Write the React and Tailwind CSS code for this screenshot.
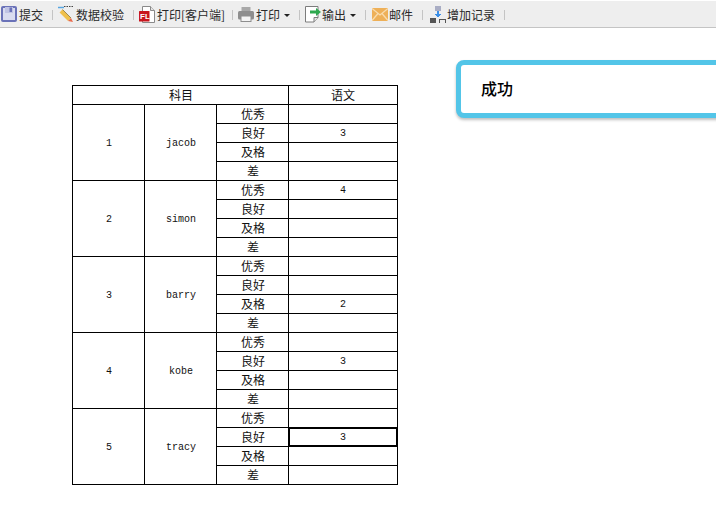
const groups = [
  { id: 1, name: "jacob", vals: ["", "3", "", ""] },
  { id: 2, name: "simon", vals: ["4", "", "", ""] },
  { id: 3, name: "barry", vals: ["", "", "2", ""] },
  { id: 4, name: "kobe", vals: ["", "3", "", ""] },
  { id: 5, name: "tracy", vals: ["", "3", "", ""] },
];
const grades = ["优秀", "良好", "及格", "差"];

const SaveIcon = () => (
  <svg width="16" height="16" viewBox="0 0 16 16">
    <rect x="1" y="1" width="14" height="14" rx="1" fill="#d9dcf0" stroke="#6a72b8" strokeWidth="2" />
    <rect x="4" y="1" width="8" height="6" fill="#bfc3e4" />
    <rect x="8.500" y="1.500" width="2.500" height="4.500" fill="#6a72b8" />
  </svg>
);
const CheckIcon = () => (
  <svg width="16" height="16" viewBox="0 0 16 16">
    <path d="M0 1.500h6" stroke="#58a6e0" strokeWidth="1.500" />
    <path d="M6 0.500h10" stroke="#444" strokeWidth="1" strokeDasharray="1.500 1" />
    <path d="M3 5l8.500 8.500" stroke="#efc04a" strokeWidth="4" />
    <path d="M4.500 3.500l8.500 8.500" stroke="#8a7434" strokeWidth="0.800" />
    <path d="M10 15l3-3 2 4z" fill="#ea6a4c" />
  </svg>
);
const PdfIcon = () => (
  <svg width="16" height="17" viewBox="0 0 16 17">
    <path d="M3.500 0.500h8l4 4v12h-12z" fill="#fff" stroke="#8a8a8a" />
    <path d="M11.500 0.500v4h4" fill="#e4e4e4" stroke="#8a8a8a" />
    <rect x="0" y="5" width="10.500" height="10.500" rx="0.500" fill="#c8161d" />
    <text x="1" y="13.300" fontSize="8" fontWeight="700" fill="#fff" fontFamily="Liberation Sans">FL</text>
  </svg>
);
const PrintIcon = () => (
  <svg width="16" height="16" viewBox="0 0 16 16">
    <rect x="3.500" y="1" width="9" height="5" rx="0.500" fill="#a8a8a8" />
    <rect x="0" y="5" width="16" height="8.500" rx="1.500" fill="#8e8e8e" />
    <rect x="3" y="10" width="10" height="5.500" fill="#f4f4f4" stroke="#8e8e8e" strokeWidth="1" />
  </svg>
);
const ExportIcon = () => (
  <svg width="16" height="17" viewBox="0 0 16 17">
    <path d="M0.500 0.500h12.500v11l-4 4.500h-8.500z" fill="#fff" stroke="#7c7c7c" />
    <path d="M9 16v-4.500h4" fill="#e4e4e4" stroke="#7c7c7c" />
    <path d="M5 4.500h6V2l5 4-5 4V7.500H5z" fill="#2fa84f" />
  </svg>
);
const MailIcon = () => (
  <svg width="16" height="13" viewBox="0 0 16 13">
    <rect width="16" height="13" fill="#eeb058" />
    <path d="M0 0.500l8 6.500 8-6.500M0 12.500l6-7M16 12.500l-6-7" fill="none" stroke="#f9dcae" strokeWidth="1.300" />
  </svg>
);
const AddIcon = () => (
  <svg width="16" height="17" viewBox="0 0 16 17" shapeRendering="crispEdges">
    <rect x="5" y="0" width="6" height="5" fill="#a9adc4" />
    <rect x="7" y="5" width="2" height="4" fill="#3b8fe8" />
    <path d="M5 8h6L8 12z" fill="#3b8fe8" />
    <rect x="0" y="12" width="6" height="5" fill="#555" />
    <path d="M9 17v-4h6v4" fill="none" stroke="#555" strokeWidth="1" />
  </svg>
);

const Caret = () => <span className="ml-1 mt-[2px] h-0 w-0 border-x-[3px] border-t-[3px] border-x-transparent border-t-[#222]" />;
const Sep = () => <span className="ml-[9px] mr-[5px] mt-[2px] h-[10px] w-px bg-[#c4c4c4]" />;

const Item = ({ icon, label, caret, labelClass = "ml-[2px]" }) => (
  <>
    <span className="flex h-[17px] w-4 shrink-0 items-center justify-center">{icon}</span>
    <span className={`whitespace-nowrap mt-[2px] ${labelClass}`}>{label}</span>
    {caret && <Caret />}
    <Sep />
  </>
);

const cell = "border border-black p-0 text-center align-middle";
const cjk = "pl-px";
const monoBase = "font-['Liberation_Mono','DejaVu_Sans_Mono',monospace] text-[10px]";
const mono = `pl-px pt-[2px] ${monoBase}`;
const value = `pt-[2px] ${monoBase}`;

export default function App() {
  return (
    <div className="h-[508px] w-[716px] overflow-hidden bg-white font-['Noto_Sans_CJK_SC','Liberation_Sans',sans-serif] text-xs text-[#111]">
      <div className="mt-px flex h-[27px] items-center border-b border-[#c4c4c4] bg-[#eeeeee] pl-[1px] text-[#2a2a2a]">
        <Item icon={<SaveIcon />} label="提交" />
        <Item icon={<CheckIcon />} label="数据校验" />
        <Item icon={<PdfIcon />} label="打印[客户端]" labelClass="ml-[2px] w-[66px]" />
        <Item icon={<PrintIcon />} label="打印" caret />
        <Item icon={<ExportIcon />} label="输出" caret labelClass="ml-px" />
        <span className="w-px" />
        <Item icon={<MailIcon />} label="邮件" labelClass="ml-px" />
        <span className="w-[2px]" />
        <Item icon={<AddIcon />} label="增加记录" labelClass="ml-px" />
      </div>
      <div className="flex items-start">
        <table className="ml-[72px] mt-[57px] w-[326px] shrink-0 table-fixed border-collapse leading-none">
          <colgroup>
            <col className="w-[72px]" />
            <col className="w-[72px]" />
            <col className="w-[72px]" />
            <col className="w-[109px]" />
          </colgroup>
          <tbody>
            <tr className="h-[19px]">
              <td colSpan={3} className={`${cell} ${cjk}`}>科目</td>
              <td className={cell}>语文</td>
            </tr>
            {groups.map((g) =>
              grades.map((gr, i) => {
                const selected = g.id === 5 && i === 1;
                return (
                  <tr key={g.id + gr} className="h-[19px]">
                    {i === 0 && (
                      <>
                        <td rowSpan={4} className={`${cell} ${mono}`}>{g.id}</td>
                        <td rowSpan={4} className={`${cell} ${mono}`}>{g.name}</td>
                      </>
                    )}
                    <td className={`${cell} ${cjk}`}>{gr}</td>
                    <td className={`${cell} ${value} ${selected ? "shadow-[inset_1px_1px_0_#000,inset_-1px_-1px_0_#000]" : ""}`}>{g.vals[i]}</td>
                  </tr>
                );
              })
            )}
          </tbody>
        </table>
        <div className="ml-[58px] mt-[32px] flex h-[58px] w-[300px] shrink-0 items-center rounded-lg border-[5px] border-[#53c5e8] bg-white pb-[2px] pl-[20px] text-base font-medium text-black shadow-[0_2px_3px_rgba(0,0,0,0.25)]">
          成功
        </div>
      </div>
    </div>
  );
}
